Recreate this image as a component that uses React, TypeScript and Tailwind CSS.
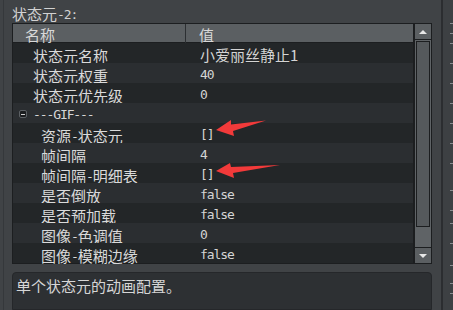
import React from "react";

type Row = { name: string; value?: string; child?: boolean; group?: boolean };

const rows: Row[] = [
  { name: "状态元名称", value: "小爱丽丝静止1" },
  { name: "状态元权重", value: "40" },
  { name: "状态元优先级", value: "0" },
  { name: "---GIF---", group: true },
  { name: "资源-状态元", value: "[]", child: true },
  { name: "帧间隔", value: "4", child: true },
  { name: "帧间隔-明细表", value: "[]", child: true },
  { name: "是否倒放", value: "false", child: true },
  { name: "是否预加载", value: "false", child: true },
  { name: "图像-色调值", value: "0", child: true },
  { name: "图像-模糊边缘", value: "false", child: true },
];

const ticks = [23, 33, 43, 63, 83, 103, 123, 143, 163, 190, 210, 223, 243, 265, 283, 293];

const cjkRe = /[\u3000-\u9fff\uff00-\uffef]/;

// CJK runs get the wide font, latin runs stay in the cell's mono font
function Txt({ s }: { s: string }) {
  const parts = s.match(/[\u3000-\u9fff\uff00-\uffef]+|[^\u3000-\u9fff\uff00-\uffef]+/g) ?? [];
  const mixed = parts.length > 1;
  return (
    <>
      {parts.map((p, i) =>
        cjkRe.test(p) || (mixed && /^\d+$/.test(p) && i === parts.length - 1) ? (
          <span key={i} className="font-['Noto_Sans_CJK_SC',sans-serif] text-[15px] tracking-normal">
            {p}
          </span>
        ) : (
          <span key={i} className={mixed ? "align-[1px]" : ""}>
            {p}
          </span>
        )
      )}
    </>
  );
}

const mono = "font-['DejaVu_Sans_Mono',monospace] text-[13px] tracking-[-1.1px]";

function TableRow({ row, i }: { row: Row; i: number }) {
  const bg = i % 2 === 0 ? "bg-[#232628]" : "bg-[#2b2e31]";
  if (row.group) {
    return (
      <div className={`flex h-[20px] items-start ${bg}`}>
        <div className="mt-[7px] ml-[6px] flex h-[8px] w-[8px] items-center justify-center rounded-[2px] border border-[#5c6064] bg-[#1b1d1f]">
          <div className="h-px w-[4px] bg-[#d0d0d0]" />
        </div>
        <div className="ml-[6px] leading-[24px] text-[#d6d6d6]">
          <Txt s={row.name} />
        </div>
      </div>
    );
  }
  return (
    <div className={`grid h-[20px] grid-cols-[173px_1fr] ${bg}`}>
      <div className={`leading-[25px] text-[#dadada] ${row.child ? "pl-[28px]" : "pl-[20px]"}`}>
        <Txt s={row.name} />
      </div>
      <div className="pl-[14px] leading-[24px] text-[#d4d4d4]">
        <Txt s={row.value ?? ""} />
      </div>
    </div>
  );
}

export default function App() {
  return (
    <div className={`relative flex h-[310px] w-[453px] overflow-hidden bg-[#404346] ${mono}`}>
      {/* left edge */}
      <div className="flex w-[12px] shrink-0">
        <div className="w-[3px]" />
        <div className="w-px bg-[#35383b]" />
      </div>

      <div className="flex w-[420px] shrink-0 flex-col">
        <div className="h-[23px] pt-px leading-[25px] text-[#d2d2d2]">
          <Txt s="状态元-2:" />
        </div>

        <div className="flex h-[241px] border border-[#1c1e20]">
          <div className="flex w-[400px] flex-col">
            <div className="grid h-[19px] grid-cols-[173px_1fr] border-b border-[#1c1e20] bg-[#5b5f62] text-[#d8d8d8]">
              <div className="border-r border-[#2c2f32] pl-[12px] leading-[22px]">
                <Txt s="名称" />
              </div>
              <div className="pl-[13px] leading-[22px]">
                <Txt s="值" />
              </div>
            </div>
            {rows.map((r, i) => (
              <TableRow key={i} row={r} i={i} />
            ))}
          </div>

          <div className="flex w-[18px] flex-col border-l-2 border-[#1c1e20] bg-[#5f6366]">
            <div className="flex h-[16px] items-center justify-center border-b border-[#1c1e20] bg-[#5b5f62]">
              <div className="h-0 w-0 border-x-[4px] border-b-[4px] border-x-transparent border-b-[#e8e8e8]" />
            </div>
            <div className="mx-[1px] mt-px h-[186px] border border-[#1c1e20] bg-[#55595c]" />
            <div className="flex-1" />
            <div className="flex h-[16px] items-center justify-center border-t border-[#1c1e20] bg-[#5b5f62]">
              <div className="h-0 w-0 border-x-[4px] border-t-[4px] border-x-transparent border-t-[#e8e8e8]" />
            </div>
          </div>
        </div>

        <div className="mt-[8px] flex-1 rounded-t-[4px] border border-[#25272a] bg-[#2d3033] pl-[3px] leading-[25px] text-[#d6d6d6]">
          <Txt s="单个状态元的动画配置。" />
        </div>
      </div>

      {/* right edge */}
      <div className="w-[9px] shrink-0" />
      <div className="w-[2px] shrink-0 bg-[#2b2d30]" />
      <div className="relative w-[10px] shrink-0 bg-[#3d4043]">
        {ticks.map((t) => (
          <div key={t} className="absolute right-0 h-px w-[3px] bg-[#8a8d90]" style={{ top: t }} />
        ))}
      </div>

      {/* red annotation arrows */}
      <svg className="pointer-events-none absolute inset-0" width="453" height="310" viewBox="0 0 453 310">
        <polygon points="216,130 231,120 231,124.5 266,120.5 233,131 234,136" fill="#f23a3a" />
        <polygon points="216,171 230,163 231,167 280,165 233,173 234,178" fill="#f23a3a" />
      </svg>
    </div>
  );
}
